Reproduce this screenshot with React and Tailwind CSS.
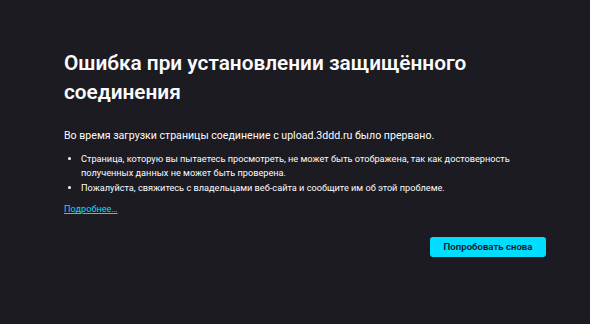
export default function App() {
  return (
    <div className="w-[590px] h-[324px] bg-[#1c1b22] text-[#fbfbfe] overflow-hidden" style={{ fontFamily: 'Roboto, sans-serif' }}>
      <div className="ml-[64px] w-[482px] pt-[49px]">
        <h1 className="text-[20.8px] leading-[29px] font-semibold">Ошибка при установлении защищённого соединения</h1>
        <p className="mt-[21px] text-[10.6px] leading-[16px]">Во время загрузки страницы соединение с upload.3ddd.ru было прервано.</p>
        <ul className="mt-[8px] text-[9.2px] leading-[14px] list-disc pl-[17px]">
          <li>Страница, которую вы пытаетесь просмотреть, не может быть отображена, так как достоверность полученных данных не может быть проверена.</li>
          <li className="mt-[1px]">Пожалуйста, свяжитесь с владельцами веб-сайта и сообщите им об этой проблеме.</li>
        </ul>
        <a href="#" className="block mt-[7px] text-[9.2px] leading-[14px] text-[#00ddff] underline">Подробнее…</a>
        <div className="flex justify-end mt-[21px]">
          <button className="h-[20px] w-[116px] rounded-[3px] bg-[#00ddff] text-[#15141a] text-[9.6px] font-semibold">Попробовать снова</button>
        </div>
      </div>
    </div>
  );
}
